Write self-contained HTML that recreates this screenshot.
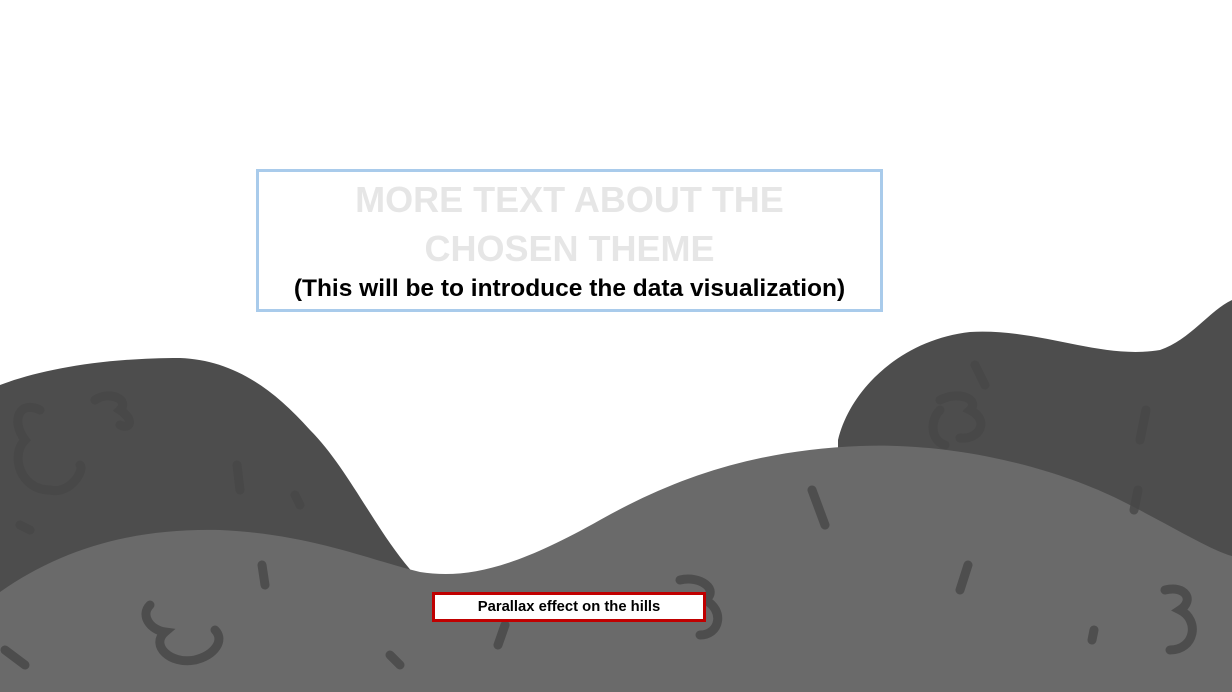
<!DOCTYPE html>
<html><head><style>
html,body{margin:0;padding:0;background:#fff;width:1232px;height:692px;overflow:hidden;position:relative;font-family:"Liberation Sans",sans-serif}
svg{position:absolute;left:0;top:0}
.box{position:absolute;left:256px;top:169px;width:621px;height:137px;border:3px solid #a9cbeb;text-align:center}
.t{color:#e6e6e6;font-weight:bold;font-size:36px;line-height:49px;margin-top:3px}
.s{color:#000;font-weight:bold;font-size:24.5px;line-height:28px;margin-top:2px;white-space:nowrap}
.r{position:absolute;left:432px;top:592px;width:268px;height:24px;border:3px solid #c00000;background:#fff;text-align:center;font-weight:bold;font-size:14.8px;line-height:24px}
</style></head><body>
<svg width="1232" height="692" viewBox="0 0 1232 692">
<path d="M0,385 C40,370 100,358 180,358 C230,360 270,385 310,430 C350,470 380,540 420,580 L0,600 Z" fill="#4d4d4d"/>
<path d="M838,440 C850,390 900,340 970,332 C1040,328 1100,360 1160,350 C1190,340 1210,310 1232,300 L1232,692 L838,692 Z" fill="#4d4d4d"/>
<path d="M0,592 C60,550 130,528 220,530 C310,534 370,560 420,572 C470,580 520,565 600,520 C680,475 760,450 860,446 C960,442 1060,470 1120,500 C1170,525 1210,550 1232,556 L1232,692 L0,692 Z" fill="#6a6a6a"/>
<g fill="none" stroke="#474747" stroke-width="9" stroke-linecap="round" opacity="0.8">
<path d="M40,410 C20,400 10,420 25,440 C10,455 20,490 50,490 C70,495 85,470 80,465"/>
<path d="M95,400 C110,390 130,400 120,410 C135,420 130,430 120,425"/>
<path d="M150,605 C140,615 150,630 165,632 C150,645 170,665 195,660 C215,655 225,640 215,630"/>
<path d="M940,400 C960,390 980,400 970,410 C990,420 980,440 960,438 M940,410 C930,420 930,440 945,445"/>
<path d="M680,580 C700,575 720,590 705,600 C725,610 720,635 700,635"/>
<path d="M1165,590 C1185,585 1195,600 1180,610 C1200,620 1195,650 1170,650"/>
<path d="M237,465 L240,490 M262,565 L265,585 M812,490 L825,525 M968,565 L960,590 M1146,410 L1140,440 M1138,490 L1134,510 M390,655 L400,665 M505,625 L498,645 M1094,630 L1092,640 M295,495 L300,505 M975,365 L985,385 M20,525 L30,530 M5,650 L25,665"/>
</g>
</svg>
<div class="box"><div class="t">MORE TEXT ABOUT THE<br>CHOSEN THEME</div><div class="s">(This will be to introduce the data visualization)</div></div>
<div class="r">Parallax effect on the hills</div>
</body></html>
